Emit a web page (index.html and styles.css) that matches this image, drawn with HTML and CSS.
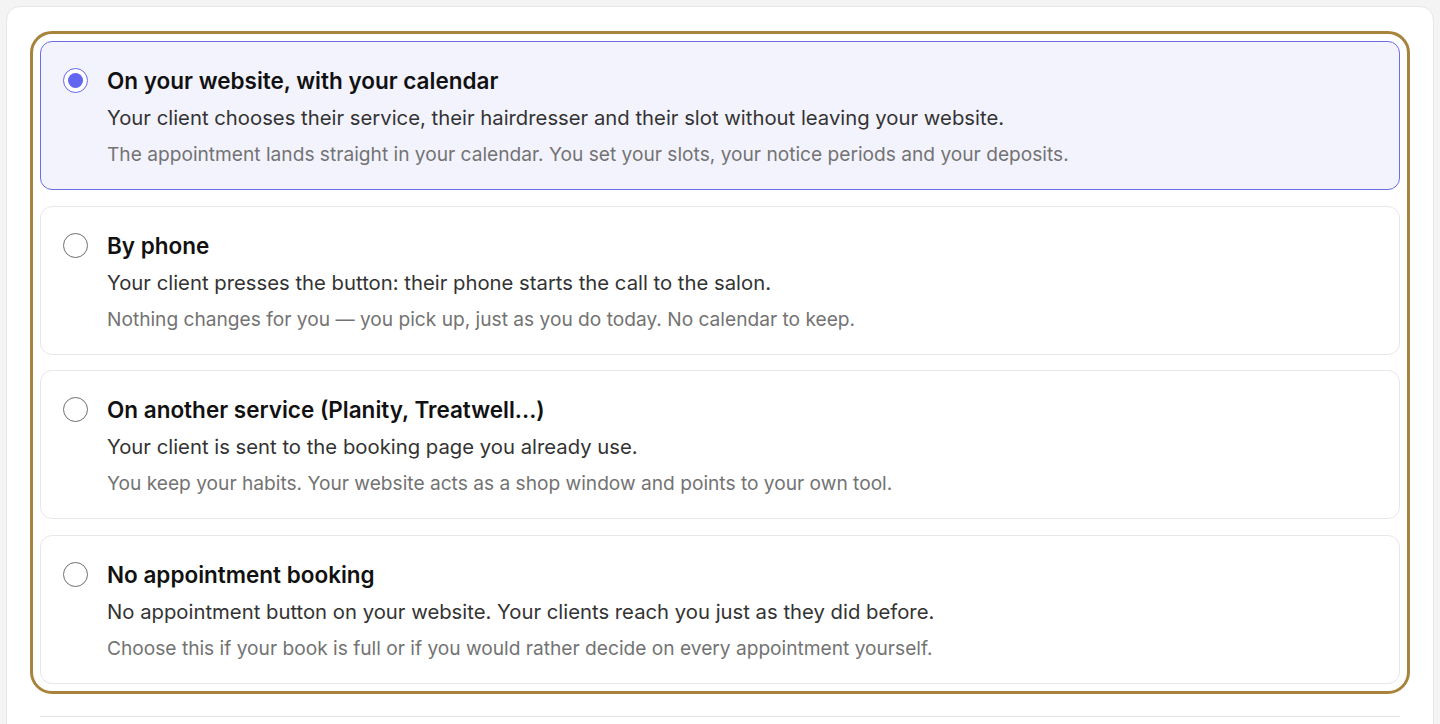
FILE: index.html
```html
<!DOCTYPE html>
<html lang="en">
<head>
<meta charset="utf-8">
<title>Booking</title>
<link rel="stylesheet" href="styles.css">
</head>
<body>
<div class="panel">
  <div class="group" role="radiogroup">
    <label class="option selected">
      <span class="radio"><span class="dot"></span></span>
      <span class="text">
        <span class="title">On your website, with your calendar</span>
        <span class="desc">Your client chooses their service, their hairdresser and their slot without leaving your website.</span>
        <span class="note">The appointment lands straight in your calendar. You set your slots, your notice periods and your deposits.</span>
      </span>
    </label>
    <label class="option">
      <span class="radio"></span>
      <span class="text">
        <span class="title">By phone</span>
        <span class="desc">Your client presses the button: their phone starts the call to the salon.</span>
        <span class="note">Nothing changes for you — you pick up, just as you do today. No calendar to keep.</span>
      </span>
    </label>
    <label class="option">
      <span class="radio"></span>
      <span class="text">
        <span class="title">On another service (Planity, Treatwell...)</span>
        <span class="desc">Your client is sent to the booking page you already use.</span>
        <span class="note">You keep your habits. Your website acts as a shop window and points to your own tool.</span>
      </span>
    </label>
    <label class="option">
      <span class="radio"></span>
      <span class="text">
        <span class="title">No appointment booking</span>
        <span class="desc">No appointment button on your website. Your clients reach you just as they did before.</span>
        <span class="note">Choose this if your book is full or if you would rather decide on every appointment yourself.</span>
      </span>
    </label>
  </div>
  <hr class="sep">
</div>
</body>
</html>
```
FILE: styles.css
```css
html, body {
  margin: 0;
  padding: 0;
}
body {
  background: #f4f4f5;
  font-family: Inter, "Noto Sans", sans-serif;
  padding: 6px;
  height: 724px;
  box-sizing: border-box;
  overflow: hidden;
}
.panel {
  background: #ffffff;
  border: 1px solid #e6e6e6;
  border-radius: 14px;
  padding: 34px 33px 40px;
}
.group {
  display: flex;
  flex-direction: column;
  gap: 15.67px;
  border-radius: 12px;
  outline: 3px solid #a7833b;
  outline-offset: 7px;
}
.option {
  display: flex;
  align-items: flex-start;
  gap: 19px;
  border: 1px solid #e5e7eb;
  border-radius: 12px;
  background: #ffffff;
  padding: 25px 22px 0;
  height: 149px;
  box-sizing: border-box;
}
.option.selected {
  background: #f3f3fe;
  border-color: #6b6ee6;
}
.radio {
  flex: none;
  width: 25px;
  height: 25px;
  border-radius: 50%;
  border: 1.5px solid #6f6f6f;
  box-sizing: border-box;
  margin-top: 1px;
  display: flex;
  align-items: center;
  justify-content: center;
  background: #fff;
}
.selected .radio {
  border-color: #6366f1;
}
.dot {
  width: 15px;
  height: 15px;
  border-radius: 50%;
  background: #6366f1;
}
.text {
  display: flex;
  flex-direction: column;
}
.title {
  font-size: 22.5px;
  font-weight: 600;
  color: #111111;
  line-height: 27px;
}
.desc {
  font-size: 20.3px;
  color: #333333;
  line-height: 26px;
  margin-top: 11px;
}
.note {
  font-size: 19.15px;
  color: #737373;
  line-height: 24px;
  margin-top: 11px;
}
.sep {
  border: 0;
  border-top: 1px solid #e2e2e2;
  margin: 32px 0 0;
}
```
